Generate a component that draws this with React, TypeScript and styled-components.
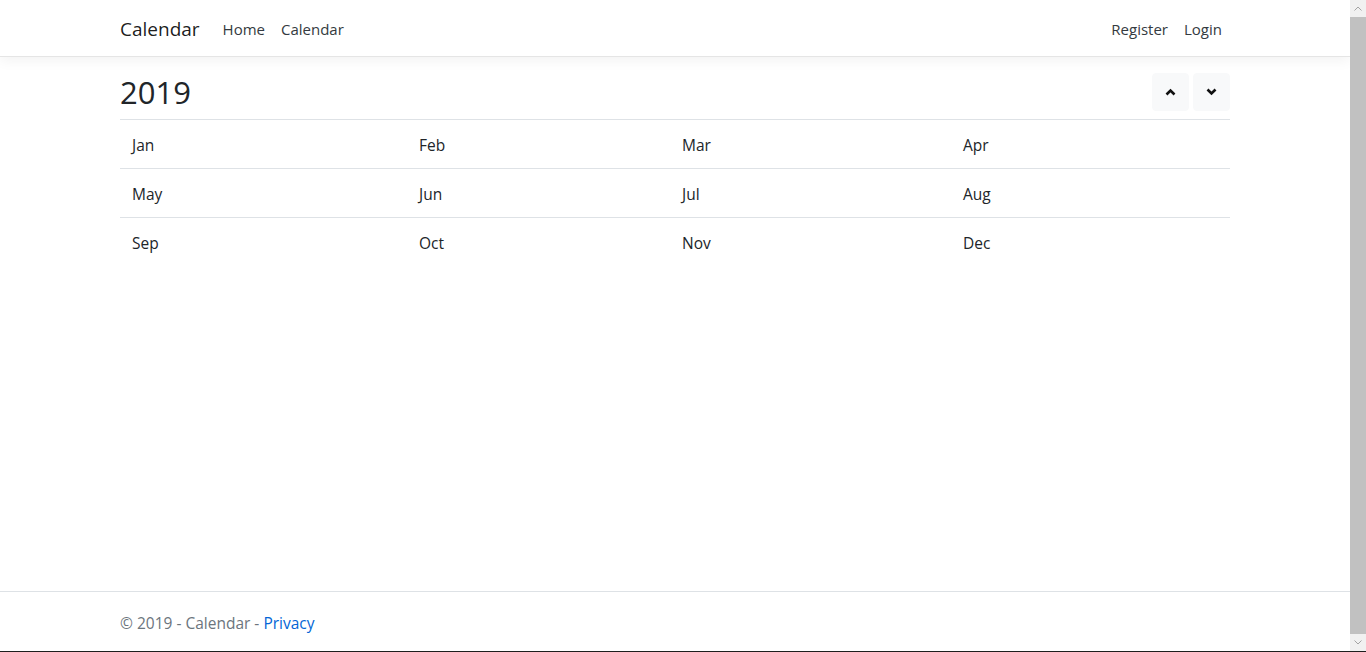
import React from "react";
import styled, { createGlobalStyle } from "styled-components";

const GlobalStyle = createGlobalStyle`
  html, body { margin: 0; padding: 0; height: 100%; overflow: hidden; }
  body {
    font-family: "Open Sans", "Noto Sans", "Liberation Sans", sans-serif;
    font-size: 16px;
    color: #212529;
    background: #fff;
  }
  * { box-sizing: border-box; }
`;

const Screen = styled.div`
  display: flex;
  flex-direction: column;
  width: 1366px;
  height: 652px;
`;

const Window = styled.div`
  display: flex;
  flex: 1;
  min-height: 0;
`;

const TaskEdge = styled.div`
  height: 1px;
  background: #1e1e1e;
`;

const Page = styled.div`
  flex: 1;
  display: flex;
  flex-direction: column;
  min-width: 0;
`;

const NavBar = styled.header`
  height: 57px;
  border-bottom: 1px solid #e5e5e5;
  box-shadow: 0 4px 12px rgba(0, 0, 0, 0.05);
  background: #fff;
  margin-bottom: 16px;
`;

const Container = styled.div`
  width: 1140px;
  margin: 0 auto;
  padding: 0 15px;
`;

const NavInner = styled(Container)`
  display: flex;
  align-items: center;
  height: 56px;
  padding-top: 2px;
`;

const Brand = styled.a`
  font-size: 19px;
  color: rgba(0, 0, 0, 0.9);
  margin-right: 16px;
  text-decoration: none;
`;

const NavLinks = styled.nav<{ $right?: boolean }>`
  display: flex;
  margin-left: ${(p) => (p.$right ? "auto" : "-1px")};
`;

const NavLink = styled.a`
  padding: 8px;
  color: #343a40;
  font-size: 15px;
  text-decoration: none;
`;

const Main = styled(Container)`
  flex: 1;
`;

const TitleRow = styled.div`
  display: flex;
  align-items: flex-start;
  justify-content: space-between;
`;

const Year = styled.h2`
  margin: 0 0 8px;
  font-size: 31px;
  font-weight: 400;
  line-height: 37px;
  padding-top: 1px;
  height: 38px;
  color: #212529;
`;

const ButtonGroup = styled.div`
  display: flex;
  gap: 4px;
`;

const IconButton = styled.button`
  width: 37px;
  height: 38px;
  display: flex;
  align-items: center;
  justify-content: center;
  background: #f8f9fa;
  border: 1px solid #f8f9fa;
  border-radius: 4px;
  padding: 0;
  color: #212529;
`;

const MonthRow = styled.div`
  display: grid;
  grid-template-columns: 287px 263px 281px 279px;
  border-top: 1px solid #dee2e6;
`;

const MonthCell = styled.div`
  padding: 13px 12px 11px;
  line-height: 24px;
  font-size: 15.5px;
  color: #212529;
`;

const Footer = styled.footer`
  border-top: 1px solid #dee2e6;
  height: 60px;
`;

const FooterInner = styled(Container)`
  line-height: 59px;
  padding-top: 2px;
  color: #6c757d;
  font-size: 15.5px;
  white-space: nowrap;
`;

const FooterLink = styled.a`
  color: #0366d6;
  text-decoration: none;
`;

const ScrollBar = styled.div`
  width: 16px;
  display: flex;
  flex-direction: column;
  background: #f1f1f1;
`;

const ScrollArrow = styled.div`
  height: 17px;
  display: flex;
  align-items: center;
  justify-content: center;
`;

const ScrollThumb = styled.div`
  flex: 1;
  background: #c1c1c1;
`;

const Chevron = ({ up }: { up?: boolean }) => (
  <svg width="11" height="8" viewBox="0 0 11 8">
    <path
      d={up ? "M1.5 6.5 L5.5 2.5 L9.5 6.5" : "M1.5 1.5 L5.5 5.5 L9.5 1.5"}
      fill="none"
      stroke="#111"
      strokeWidth="2.6"
      strokeLinecap="butt"
      strokeLinejoin="miter"
    />
  </svg>
);

const ScrollChevron = ({ up }: { up?: boolean }) => (
  <svg width="8" height="5" viewBox="0 0 8 5">
    <path
      d={up ? "M0.5 4.5 L4 1 L7.5 4.5" : "M0.5 0.5 L4 4 L7.5 0.5"}
      fill="none"
      stroke="#a3a3a3"
      strokeWidth="1"
    />
  </svg>
);

const months = [
  ["Jan", "Feb", "Mar", "Apr"],
  ["May", "Jun", "Jul", "Aug"],
  ["Sep", "Oct", "Nov", "Dec"],
];

export default function App() {
  return (
    <>
      <GlobalStyle />
      <Screen>
        <Window>
          <Page>
            <NavBar>
              <NavInner>
                <Brand href="#">Calendar</Brand>
                <NavLinks>
                  <NavLink href="#">Home</NavLink>
                  <NavLink href="#">Calendar</NavLink>
                </NavLinks>
                <NavLinks $right>
                  <NavLink href="#">Register</NavLink>
                  <NavLink href="#">Login</NavLink>
                </NavLinks>
              </NavInner>
            </NavBar>
            <Main>
              <TitleRow>
                <Year>2019</Year>
                <ButtonGroup>
                  <IconButton aria-label="Previous year">
                    <Chevron up />
                  </IconButton>
                  <IconButton aria-label="Next year">
                    <Chevron />
                  </IconButton>
                </ButtonGroup>
              </TitleRow>
              {months.map((row) => (
                <MonthRow key={row[0]}>
                  {row.map((m) => (
                    <MonthCell key={m}>{m}</MonthCell>
                  ))}
                </MonthRow>
              ))}
            </Main>
            <Footer>
              <FooterInner>
                © 2019 - Calendar - <FooterLink href="#">Privacy</FooterLink>
              </FooterInner>
            </Footer>
          </Page>
          <ScrollBar>
            <ScrollArrow>
              <ScrollChevron up />
            </ScrollArrow>
            <ScrollThumb />
            <ScrollArrow>
              <ScrollChevron />
            </ScrollArrow>
          </ScrollBar>
        </Window>
        <TaskEdge />
      </Screen>
    </>
  );
}
